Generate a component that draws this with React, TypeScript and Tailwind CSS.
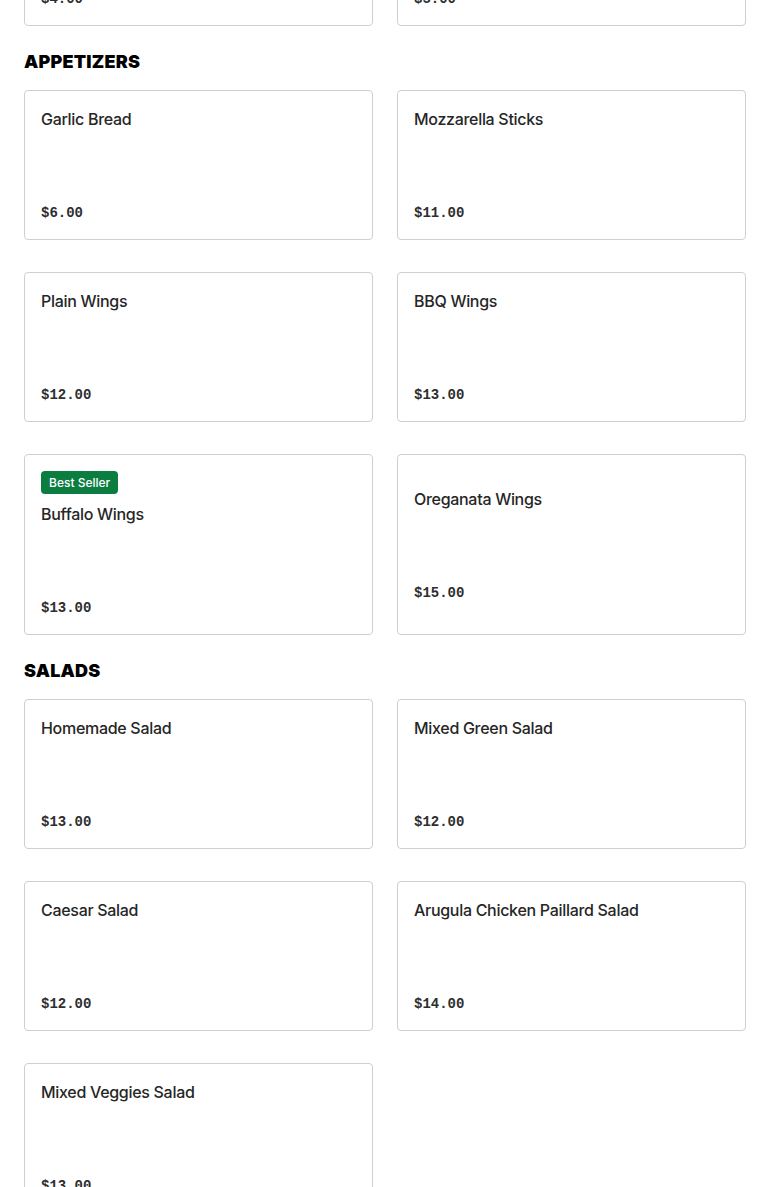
import React from 'react'

type Item = { name: string; price: string; badge?: string }

const PREV: Item[] = [
  { name: 'Side of Fries', price: '$4.00' },
  { name: 'Side of Rice', price: '$5.00' },
]

const SECTIONS: { title: string; items: Item[] }[] = [
  {
    title: 'Appetizers',
    items: [
      { name: 'Garlic Bread', price: '$6.00' },
      { name: 'Mozzarella Sticks', price: '$11.00' },
      { name: 'Plain Wings', price: '$12.00' },
      { name: 'BBQ Wings', price: '$13.00' },
      { name: 'Buffalo Wings', price: '$13.00', badge: 'Best Seller' },
      { name: 'Oreganata Wings', price: '$15.00' },
    ],
  },
  {
    title: 'Salads',
    items: [
      { name: 'Homemade Salad', price: '$13.00' },
      { name: 'Mixed Green Salad', price: '$12.00' },
      { name: 'Caesar Salad', price: '$12.00' },
      { name: 'Arugula Chicken Paillard Salad', price: '$14.00' },
      { name: 'Mixed Veggies Salad', price: '$13.00' },
    ],
  },
]

function Card({ item }: { item: Item }) {
  return (
    <div className="bg-white border border-[#cfcfcf] rounded-[4px] p-4 flex flex-col justify-center">
      {item.badge && (
        <span className="self-start bg-[#0b7d41] text-white text-[12px] leading-[23px] h-[23px] px-2 rounded-[4px] mb-2 font-medium">
          {item.badge}
        </span>
      )}
      <p className="text-[16px] leading-6 font-medium text-[#262626] tracking-[-0.3px]">{item.name}</p>
      <div className="h-[72px]" />
      <p className="font-['Liberation_Mono',monospace] text-[14px] leading-5 font-bold text-[#2e2e2e]">
        {item.price}
      </p>
    </div>
  )
}

function Grid({ items }: { items: Item[] }) {
  return (
    <div className="grid grid-cols-2 gap-x-6 gap-y-8">
      {items.map(item => (
        <Card key={item.name} item={item} />
      ))}
    </div>
  )
}

export default function App() {
  return (
    <main className="h-[1187px] overflow-hidden bg-white font-['Inter','Liberation_Sans',sans-serif]">
      <div className="px-6 -mt-[124px]">
        <Grid items={PREV} />
        {SECTIONS.map(section => (
          <section key={section.title}>
            <h2 className="mt-[22px] mb-[14px] text-[18px] leading-7 font-black uppercase text-black tracking-[0.2px]">
              {section.title}
            </h2>
            <Grid items={section.items} />
          </section>
        ))}
      </div>
    </main>
  )
}
